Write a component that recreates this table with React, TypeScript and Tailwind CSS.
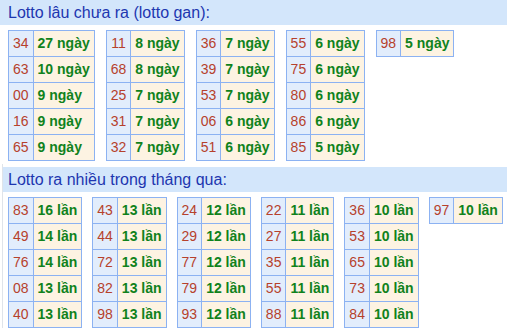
import React from "react";

type Item = [string, string];

const ganTables: Item[][] = [
  [["34", "27 ngày"], ["63", "10 ngày"], ["00", "9 ngày"], ["16", "9 ngày"], ["65", "9 ngày"]],
  [["11", "8 ngày"], ["68", "8 ngày"], ["25", "7 ngày"], ["31", "7 ngày"], ["32", "7 ngày"]],
  [["36", "7 ngày"], ["39", "7 ngày"], ["53", "7 ngày"], ["06", "6 ngày"], ["51", "6 ngày"]],
  [["55", "6 ngày"], ["75", "6 ngày"], ["80", "6 ngày"], ["86", "6 ngày"], ["85", "5 ngày"]],
  [["98", "5 ngày"]],
];

const nhieuTables: Item[][] = [
  [["83", "16 lần"], ["49", "14 lần"], ["76", "14 lần"], ["08", "13 lần"], ["40", "13 lần"]],
  [["43", "13 lần"], ["44", "13 lần"], ["72", "13 lần"], ["82", "13 lần"], ["98", "13 lần"]],
  [["24", "12 lần"], ["29", "12 lần"], ["77", "12 lần"], ["79", "12 lần"], ["93", "12 lần"]],
  [["22", "11 lần"], ["27", "11 lần"], ["35", "11 lần"], ["55", "11 lần"], ["88", "11 lần"]],
  [["36", "10 lần"], ["53", "10 lần"], ["65", "10 lần"], ["73", "10 lần"], ["84", "10 lần"]],
  [["97", "10 lần"]],
];

const LotoTable: React.FC<{ rows: Item[] }> = ({ rows }) => (
  <table className="border-collapse border border-[#8cb2f2] self-start">
    <tbody>
      {rows.map(([num, val], i) => (
        <tr key={i} className="h-[26px]">
          <td className="border border-[#8cb2f2] bg-[#e2edfc] px-[4px] text-[14px] text-[#b6412c] text-center">
            {num}
          </td>
          <td className="border border-[#8cb2f2] bg-[#fdf3e2] px-[4px] text-[14px] font-bold text-[#10821c] text-left whitespace-nowrap">
            {val}
          </td>
        </tr>
      ))}
    </tbody>
  </table>
);

export default function App() {
  return (
    <div className="w-[507px] h-[331px] overflow-hidden bg-white font-['Liberation_Sans',Arial,sans-serif]">
      <div className="h-[25px] bg-[#d3e6fb] pl-[8px] flex items-center text-[16px] text-[#1d36b0]">
        Lotto lâu chưa ra (lotto gan):
      </div>
      <div className="flex items-start gap-[11px] pl-[8px] pt-[5px]">
        {ganTables.map((t, i) => (
          <LotoTable key={i} rows={t} />
        ))}
      </div>
      <div className="ml-[2px] mt-[3px] border-l border-[#dfe4ea] pt-[3px]">
        <div className="h-[25px] bg-[#d3e6fb] pl-[5px] flex items-center text-[16px] text-[#1d36b0]">
          Lotto ra nhiều trong tháng qua:
        </div>
        <div className="flex items-start gap-[10px] pl-[5px] pt-[5px]">
          {nhieuTables.map((t, i) => (
            <LotoTable key={i} rows={t} />
          ))}
        </div>
      </div>
    </div>
  );
}
